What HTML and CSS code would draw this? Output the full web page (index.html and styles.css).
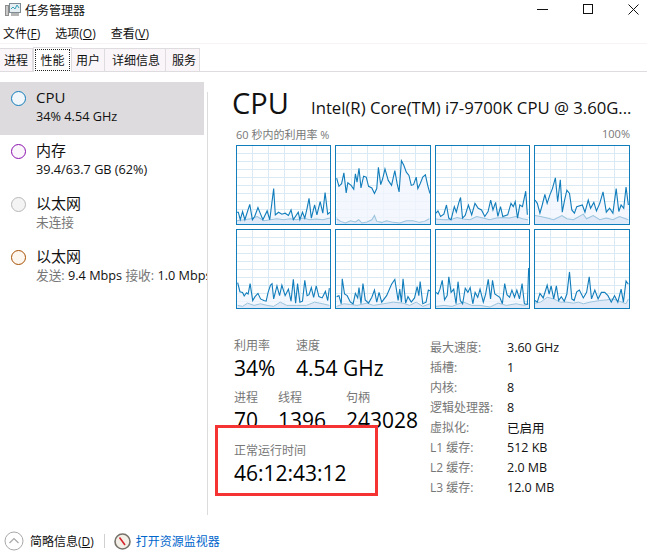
FILE: index.html
```html
<!DOCTYPE html>
<html lang="zh-CN">
<head>
    <meta charset="UTF-8">
    <title>任务管理器</title>
    <link rel="stylesheet" href="styles.css">
</head>
<body>
<div class="window">

    <div class="titlebar">
        <svg class="app-icon" width="16" height="15" viewBox="0 0 16 15">
            <rect x="4.5" y="1.5" width="11" height="9" fill="#e4eef3" stroke="#7f8c94"/>
            <polyline points="6,7 8,5 10,7 12,3 14,6" fill="none" stroke="#3aa1b8"/>
            <rect x="0.5" y="3.5" width="3" height="10" fill="#c9c9c9" stroke="#8d8d8d"/>
            <rect x="6" y="11" width="8" height="3" fill="#b5b5b5"/>
        </svg>
        <span class="app-name">任务管理器</span>
        <div class="win-buttons">
            <svg width="11" height="11" viewBox="0 0 11 11"><path d="M0 5.5H11" stroke="#111"/></svg>
            <svg width="11" height="11" viewBox="0 0 11 11"><rect x="0.5" y="0.5" width="9" height="9" fill="none" stroke="#111"/></svg>
            <svg width="11" height="11" viewBox="0 0 11 11"><path d="M0.5 0.5L10.5 10.5M10.5 0.5L0.5 10.5" stroke="#111"/></svg>
        </div>
    </div>

    <div class="menubar">
        <span>文件(<u>F</u>)</span>
        <span>选项(<u>O</u>)</span>
        <span>查看(<u>V</u>)</span>
    </div>

    <div class="tabs">
        <div class="tab">进程</div>
        <div class="tab active"><span class="focus">性能</span></div>
        <div class="tab">用户</div>
        <div class="tab tab-wide">详细信息</div>
        <div class="tab tab-last">服务</div>
    </div>

    <div class="main">
        <div class="sidebar">
            <div class="device selected">
                <span class="dot dot-cpu"></span>
                <div class="device-text">
                    <div class="device-name">CPU</div>
                    <div class="device-sub">34% 4.54 GHz</div>
                </div>
            </div>
            <div class="device">
                <span class="dot dot-mem"></span>
                <div class="device-text">
                    <div class="device-name">内存</div>
                    <div class="device-sub">39.4/63.7 GB (62%)</div>
                </div>
            </div>
            <div class="device">
                <span class="dot dot-off"></span>
                <div class="device-text">
                    <div class="device-name">以太网</div>
                    <div class="device-sub muted">未连接</div>
                </div>
            </div>
            <div class="device">
                <span class="dot dot-net"></span>
                <div class="device-text">
                    <div class="device-name">以太网</div>
                    <div class="device-sub"><span class="muted">发送:</span> 9.4 Mbps <span class="muted">接收:</span> 1.0 Mbps</div>
                </div>
            </div>
        </div>
        <div class="divider"></div>

        <div class="panel">
            <div class="panel-head">
                <span class="panel-title">CPU</span>
                <span class="panel-model">Intel(R) Core(TM) i7-9700K CPU @ 3.60G...</span>
            </div>
            <div class="chart-labels">
                <span>60 秒内的利用率 %</span>
                <span>100%</span>
            </div>

            <div class="charts">
                <div class="chart">
                    <svg viewBox="18 60 284 238" preserveAspectRatio="none">
                        <polygon class="area" points="18,298 22,262 28,285 35,260 42,285 57,238 65,285 72,275 82,248 90,268 97,285 110,258 118,285 130,190 135,270 145,262 155,268 165,265 175,272 183,255 190,285 205,262 210,285 218,262 225,280 232,250 238,220 245,280 255,240 262,270 272,230 280,265 287,202 295,268 302,262 302,298"/>
                        <polygon class="kernel" points="18,298 18,288 40,285 60,282 80,275 100,288 120,285 140,282 160,285 180,282 200,285 220,280 240,285 260,283 280,285 302,280 302,298"/>
                        <polyline class="kernel-line" points="18,288 40,285 60,282 80,275 100,288 120,285 140,282 160,285 180,282 200,285 220,280 240,285 260,283 280,285 302,280"/>
                        <polyline class="line" points="18,262 22,262 28,285 35,260 42,285 57,238 65,285 72,275 82,248 90,268 97,285 110,258 118,285 130,190 135,270 145,262 155,268 165,265 175,272 183,255 190,285 205,262 210,285 218,262 225,280 232,250 238,220 245,280 255,240 262,270 272,230 280,265 287,202 295,268 302,262"/>
                    </svg>
                </div>
                <div class="chart">
                    <svg viewBox="316 60 286 238" preserveAspectRatio="none">
                        <polygon class="area" points="318,298 318,158 325,183 333,175 340,142 347,203 352,172 362,180 370,192 375,145 380,170 386,128 392,188 400,152 408,155 415,183 425,188 433,205 440,190 445,125 452,178 458,160 465,130 475,165 485,180 495,135 502,175 508,200 515,105 522,118 530,140 538,150 545,180 552,178 560,155 565,190 572,175 580,155 588,148 595,180 602,205 602,298"/>
                        <polygon class="kernel" points="318,298 318,282 330,290 345,295 360,288 375,292 385,285 395,295 410,292 425,285 433,272 440,290 455,293 470,288 490,293 510,295 530,288 550,288 570,293 585,290 600,282 602,298"/>
                        <polyline class="kernel-line" points="318,282 330,290 345,295 360,288 375,292 385,285 395,295 410,292 425,285 433,272 440,290 455,293 470,288 490,293 510,295 530,288 550,288 570,293 585,290 600,282"/>
                        <polyline class="line" points="318,158 325,183 333,175 340,142 347,203 352,172 362,180 370,192 375,145 380,170 386,128 392,188 400,152 408,155 415,183 425,188 433,205 440,190 445,125 452,178 458,160 465,130 475,165 485,180 495,135 502,175 508,200 515,105 522,118 530,140 538,150 545,180 552,178 560,155 565,190 572,175 580,155 588,148 595,180 602,205"/>
                    </svg>
                </div>
                <div class="chart">
                    <svg viewBox="16 60 284 238" preserveAspectRatio="none">
                        <polygon class="area" points="16,298 16,265 22,258 30,275 40,268 48,240 55,280 62,285 72,245 78,262 85,235 91,217 97,280 105,272 115,240 125,270 135,235 145,250 155,255 165,275 175,260 183,225 190,255 198,232 205,275 213,245 220,275 235,270 245,235 252,245 258,230 265,280 272,240 280,245 290,198 295,270 298,298"/>
                        <polygon class="kernel" points="16,298 16,283 40,285 60,285 80,278 100,283 120,285 140,275 160,280 180,285 200,280 220,278 240,280 260,275 280,282 297,285 298,298"/>
                        <polyline class="kernel-line" points="16,283 40,285 60,285 80,278 100,283 120,285 140,275 160,280 180,285 200,280 220,278 240,280 260,275 280,282 297,285"/>
                        <polyline class="line" points="16,265 22,258 30,275 40,268 48,240 55,280 62,285 72,245 78,262 85,235 91,217 97,280 105,272 115,240 125,270 135,235 145,250 155,255 165,275 175,260 183,225 190,255 198,232 205,275 213,245 220,275 235,270 245,235 252,245 258,230 265,280 272,240 280,245 290,198 295,270"/>
                    </svg>
                </div>
                <div class="chart">
                    <svg viewBox="313 60 286 238" preserveAspectRatio="none">
                        <polygon class="area" points="313,298 313,225 320,235 328,265 335,240 343,208 350,235 358,210 366,190 375,157 382,230 390,163 396,262 403,225 410,195 418,205 425,255 433,265 440,245 457,240 465,262 475,225 482,250 492,232 500,258 510,235 520,200 530,262 540,250 550,265 560,190 568,260 575,240 583,250 590,185 597,240 599,298"/>
                        <polygon class="kernel" points="313,298 313,272 330,275 350,280 370,285 395,272 410,282 430,285 460,268 470,282 490,272 510,285 530,280 550,285 570,275 597,285 599,298"/>
                        <polyline class="kernel-line" points="313,272 330,275 350,280 370,285 395,272 410,282 430,285 460,268 470,282 490,272 510,285 530,280 550,285 570,275 597,285"/>
                        <polyline class="line" points="313,225 320,235 328,265 335,240 343,208 350,235 358,210 366,190 375,157 382,230 390,163 396,262 403,225 410,195 418,205 425,255 433,265 440,245 457,240 465,262 475,225 482,250 492,232 500,258 510,235 520,200 530,262 540,250 550,265 560,190 568,260 575,240 583,250 590,185 597,240"/>
                    </svg>
                </div>
                <div class="chart">
                    <svg viewBox="18 13 284 240" preserveAspectRatio="none">
                        <polygon class="area" points="18,253 20,175 27,203 35,205 40,216 47,206 52,210 58,178 66,230 73,218 82,208 90,225 100,230 107,232 113,205 120,183 125,178 130,225 140,185 148,215 155,183 165,215 175,195 183,232 190,165 197,238 203,178 210,235 218,232 225,168 232,215 238,212 245,190 252,220 260,185 268,218 278,222 288,202 295,230 300,192 302,253"/>
                        <polygon class="kernel" points="18,253 20,245 35,248 50,238 70,245 90,240 110,245 130,248 150,235 170,245 200,245 230,245 255,235 280,240 300,245 302,253"/>
                        <polyline class="kernel-line" points="20,245 35,248 50,238 70,245 90,240 110,245 130,248 150,235 170,245 200,245 230,245 255,235 280,240 300,245"/>
                        <polyline class="line" points="20,175 27,203 35,205 40,216 47,206 52,210 58,178 66,230 73,218 82,208 90,225 100,230 107,232 113,205 120,183 125,178 130,225 140,185 148,215 155,183 165,215 175,195 183,232 190,165 197,238 203,178 210,235 218,232 225,168 232,215 238,212 245,190 252,220 260,185 268,218 278,222 288,202 295,230 300,192"/>
                    </svg>
                </div>
                <div class="chart">
                    <svg viewBox="316 13 286 240" preserveAspectRatio="none">
                        <polygon class="area" points="316,253 318,218 325,215 332,240 335,163 342,210 350,215 360,235 368,240 375,208 382,222 386,190 392,240 398,178 405,228 415,238 425,220 433,198 440,235 447,205 455,235 470,215 485,180 495,165 505,230 510,195 515,235 520,163 528,238 535,218 545,235 555,222 563,187 568,215 572,172 580,240 590,235 597,198 602,200 602,253"/>
                        <polygon class="kernel" points="316,253 318,248 340,240 360,242 380,245 410,238 430,245 460,240 490,235 520,238 540,245 560,235 580,248 602,240 602,253"/>
                        <polyline class="kernel-line" points="318,248 340,240 360,242 380,245 410,238 430,245 460,240 490,235 520,238 540,245 560,235 580,248 602,240"/>
                        <polyline class="line" points="318,218 325,215 332,240 335,163 342,210 350,215 360,235 368,240 375,208 382,222 386,190 392,240 398,178 405,228 415,238 425,220 433,198 440,235 447,205 455,235 470,215 485,180 495,165 505,230 510,195 515,235 520,163 528,238 535,218 545,235 555,222 563,187 568,215 572,172 580,240 590,235 597,198 602,200"/>
                    </svg>
                </div>
                <div class="chart">
                    <svg viewBox="16 13 283 240" preserveAspectRatio="none">
                        <polygon class="area" points="16,253 16,205 22,210 28,195 35,168 42,228 50,215 55,157 62,205 70,195 77,240 83,172 90,230 97,240 105,192 113,205 120,190 128,240 135,205 143,220 150,195 160,235 167,210 175,165 182,225 188,168 195,210 210,220 218,240 225,178 232,212 240,220 247,198 255,220 262,198 270,225 278,178 285,240 294,242 298,130 299,253"/>
                        <polygon class="kernel" points="16,253 16,248 40,245 65,248 85,240 100,235 125,245 150,245 180,250 205,238 230,245 260,240 285,245 298,240 299,253"/>
                        <polyline class="kernel-line" points="16,248 40,245 65,248 85,240 100,235 125,245 150,245 180,250 205,238 230,245 260,240 285,245 298,240"/>
                        <polyline class="line" points="16,205 22,210 28,195 35,168 42,228 50,215 55,157 62,205 70,195 77,240 83,172 90,230 97,240 105,192 113,205 120,190 128,240 135,205 143,220 150,195 160,235 167,210 175,165 182,225 188,168 195,210 210,220 218,240 225,178 232,212 240,220 247,198 255,220 262,198 270,225 278,178 285,240 294,242 298,130"/>
                    </svg>
                </div>
                <div class="chart">
                    <svg viewBox="313 13 286 240" preserveAspectRatio="none">
                        <polygon class="area" points="313,253 313,230 320,235 328,208 338,222 350,183 356,210 362,185 370,225 378,185 385,230 393,218 402,232 410,210 418,142 425,225 432,230 440,203 448,198 460,222 470,205 478,157 485,225 495,198 505,225 515,205 525,205 535,215 545,235 555,215 565,235 575,195 582,235 590,170 597,180 599,253"/>
                        <polygon class="kernel" points="313,253 313,238 330,235 350,220 370,225 390,235 410,235 430,238 445,235 460,240 480,235 510,230 530,228 550,225 570,232 590,240 597,225 599,253"/>
                        <polyline class="kernel-line" points="313,238 330,235 350,220 370,225 390,235 410,235 430,238 445,235 460,240 480,235 510,230 530,228 550,225 570,232 590,240 597,225"/>
                        <polyline class="line" points="313,230 320,235 328,208 338,222 350,183 356,210 362,185 370,225 378,185 385,230 393,218 402,232 410,210 418,142 425,225 432,230 440,203 448,198 460,222 470,205 478,157 485,225 495,198 505,225 515,205 525,205 535,215 545,235 555,215 565,235 575,195 582,235 590,170 597,180"/>
                    </svg>
                </div>
            </div>

            <div class="details">
                <div class="stats">
                    <div class="stat-row">
                        <div class="stat stat-usage">
                            <div class="stat-label">利用率</div>
                            <div class="stat-value">34%</div>
                        </div>
                        <div class="stat">
                            <div class="stat-label">速度</div>
                            <div class="stat-value">4.54 GHz</div>
                        </div>
                    </div>
                    <div class="stat-row">
                        <div class="stat stat-proc">
                            <div class="stat-label">进程</div>
                            <div class="stat-value">70</div>
                        </div>
                        <div class="stat stat-thread">
                            <div class="stat-label">线程</div>
                            <div class="stat-value">1396</div>
                        </div>
                        <div class="stat">
                            <div class="stat-label">句柄</div>
                            <div class="stat-value">243028</div>
                        </div>
                    </div>
                    <div class="stat-row uptime">
                        <div class="stat">
                            <div class="stat-label">正常运行时间</div>
                            <div class="stat-value">46:12:43:12</div>
                        </div>
                        <div class="red-box"></div>
                    </div>
                </div>

                <div class="specs">
                    <div class="spec"><span class="spec-key">最大速度:</span><span>3.60 GHz</span></div>
                    <div class="spec"><span class="spec-key">插槽:</span><span>1</span></div>
                    <div class="spec"><span class="spec-key">内核:</span><span>8</span></div>
                    <div class="spec"><span class="spec-key">逻辑处理器:</span><span>8</span></div>
                    <div class="spec"><span class="spec-key">虚拟化:</span><span>已启用</span></div>
                    <div class="spec"><span class="spec-key">L1 缓存:</span><span>512 KB</span></div>
                    <div class="spec"><span class="spec-key">L2 缓存:</span><span>2.0 MB</span></div>
                    <div class="spec"><span class="spec-key">L3 缓存:</span><span>12.0 MB</span></div>
                </div>
            </div>
        </div>
    </div>

    <div class="footer">
        <svg width="20" height="20" viewBox="0 0 20 20">
            <circle cx="10" cy="10" r="9" fill="#fff" stroke="#a8a8a8"/>
            <polyline points="5.5,12 10,7.5 14.5,12" fill="none" stroke="#a8a8a8" stroke-width="1.2"/>
        </svg>
        <span class="less-info">简略信息(<u>D</u>)</span>
        <span class="footer-sep"></span>
        <svg width="17" height="17" viewBox="0 0 17 17">
            <circle cx="8.5" cy="8.5" r="7.5" fill="#f3efe6" stroke="#77736c" stroke-width="1.6"/>
            <path d="M5.5 4.5L11 12" stroke="#d8232a" stroke-width="1.6"/>
        </svg>
        <a class="monitor-link">打开资源监视器</a>
    </div>

</div>
</body>
</html>
```

FILE: styles.css
```css
* {
    box-sizing: border-box;
}

body {
    margin: 0;
    background-color: white;
    color: #111;
    font-family: "Open Sans", "Noto Sans CJK SC", sans-serif;
    font-size: 12px;
}

.window {
    width: 647px;
    height: 558px;
    overflow: hidden;
    display: flex;
    flex-direction: column;
}

/* title bar */
.titlebar {
    height: 19px;
    display: flex;
    align-items: center;
    padding-left: 5px;
}
.app-name {
    margin-left: 4px;
}
.win-buttons {
    margin-left: auto;
    display: flex;
    gap: 34.5px;
    padding-right: 8px;
}

/* menu */
.menubar {
    height: 25px;
    display: flex;
    align-items: center;
    gap: 15px;
    padding: 4px 0 0 3px;
    border-bottom: 1px solid #f8f3f5;
}

/* tabs */
.tabs {
    height: 28px;
    display: flex;
    align-items: flex-end;
    border-bottom: 1px solid #dedcde;
}
.tab {
    height: 23px;
    padding: 0 4px;
    display: flex;
    align-items: center;
    background-color: #f9f5f9;
    border: 1px solid #dedcde;
    border-bottom: 0;
    border-left: 0;
}
.tab-wide {
    padding: 0 5px 0 7px;
}
.tab-last {
    padding: 0 3px 0 6px;
}
.tab.active {
    height: 25px;
    background-color: white;
    border-left: 1px solid #dedcde;
    margin-bottom: -1px;
    padding: 0 1px;
}
.focus {
    padding: 2px 5.5px;
    outline: 1px dotted #222;
    outline-offset: -1px;
}

/* main area */
.main {
    flex: 1;
    display: flex;
    min-height: 0;
}
.sidebar {
    width: 207px;
    padding-top: 10px;
    overflow: hidden;
}
.device {
    width: 204px;
    height: 53px;
    display: flex;
    padding: 5px 0 0 11px;
    white-space: nowrap;
}
.device.selected {
    background-color: #dddbdd;
}
.dot {
    width: 15px;
    height: 15px;
    margin-top: 4px;
    border-radius: 50%;
    border: 1px solid;
    flex-shrink: 0;
}
.dot-cpu {
    border-color: #117dbb;
    background-color: #f1f6fa;
}
.dot-mem {
    border-color: #8b12ae;
    background-color: #fbf5fc;
}
.dot-off {
    border-color: #b8b8b8;
    background-color: #f4f4f4;
}
.dot-net {
    border-color: #a74f01;
    background-color: #fdf7f0;
}
.device-text {
    margin-left: 10px;
}
.device-name {
    font-size: 15px;
    line-height: 20px;
}
.device-sub {
    font-size: 12.7px;
    line-height: 16px;
    margin-top: 1px;
}
.muted {
    color: #777;
}
.divider {
    width: 1px;
    height: 423px;
    margin-top: 20px;
    background-color: #dcdcdc;
}

/* right panel */
.panel {
    margin-left: 25px;
    width: 400px;
}
.panel-head {
    height: 50px;
    display: flex;
    align-items: baseline;
    padding-top: 11px;
    margin-left: -1px;
    white-space: nowrap;
}
.panel-title {
    font-size: 29px;
    line-height: 40px;
    width: 79px;
}
.panel-model {
    font-size: 16.7px;
}
.chart-labels {
    height: 23px;
    margin-left: 3px;
    width: 394px;
    display: flex;
    justify-content: space-between;
    align-items: center;
    font-size: 11px;
    color: #777;
}
.charts {
    margin-left: 3px;
    width: 394px;
    display: grid;
    grid-template-columns: 95px 96px 95px 96px;
    grid-template-rows: 80px 80px;
    gap: 4px;
}
.chart {
    border: 1px solid #117dbb;
    background-color: white;
    background-image:
        linear-gradient(to right, #d9eaf4 1px, transparent 1px),
        linear-gradient(to bottom, #d9eaf4 1px, transparent 1px);
    background-size: 16px 8px;
    background-position: 15px 7px;
}
.chart svg {
    display: block;
    width: 100%;
    height: 100%;
}
.area {
    fill: #f1f5fd;
    fill-opacity: 0.8;
}
.kernel {
    fill: #dbe5f6;
    fill-opacity: 0.8;
}
.line, .kernel-line {
    fill: none;
    vector-effect: non-scaling-stroke;
}
.line {
    stroke: #117dbb;
    stroke-width: 1.1;
}
.kernel-line {
    stroke: #9cc4de;
    stroke-width: 1;
}

/* numbers under the charts */
.details {
    display: flex;
    margin-top: 28px;
}
.stats {
    width: 197px;
    padding-left: 1px;
}
.stat-row {
    display: flex;
    height: 52px;
}
.stat-label {
    font-size: 12px;
    line-height: 18px;
    color: #777;
}
.stat-value {
    font-size: 21px;
    line-height: 26px;
    color: #000;
}
.stat-usage {
    width: 62px;
}
.stat-proc {
    width: 44px;
}
.stat-thread {
    width: 68px;
}
.uptime {
    position: relative;
    margin-top: 1px;
}
.red-box {
    position: absolute;
    left: -19px;
    top: -17px;
    width: 163px;
    height: 71px;
    border: 3px solid #f63333;
}
.spec {
    height: 20px;
    display: flex;
    align-items: center;
    font-size: 12.5px;
}
.spec-key {
    width: 77px;
    font-size: 12px;
    color: #777;
}

/* bottom bar */
.footer {
    height: 28px;
    display: flex;
    align-items: center;
    padding: 0 0 6px 4px;
    flex-shrink: 0;
}
.less-info {
    margin-left: 6px;
}
.footer-sep {
    width: 1px;
    height: 14px;
    margin: 0 9px 0 10px;
    background-color: #d0d0d0;
}
.monitor-link {
    margin-left: 5px;
    color: #0066cc;
}
```
